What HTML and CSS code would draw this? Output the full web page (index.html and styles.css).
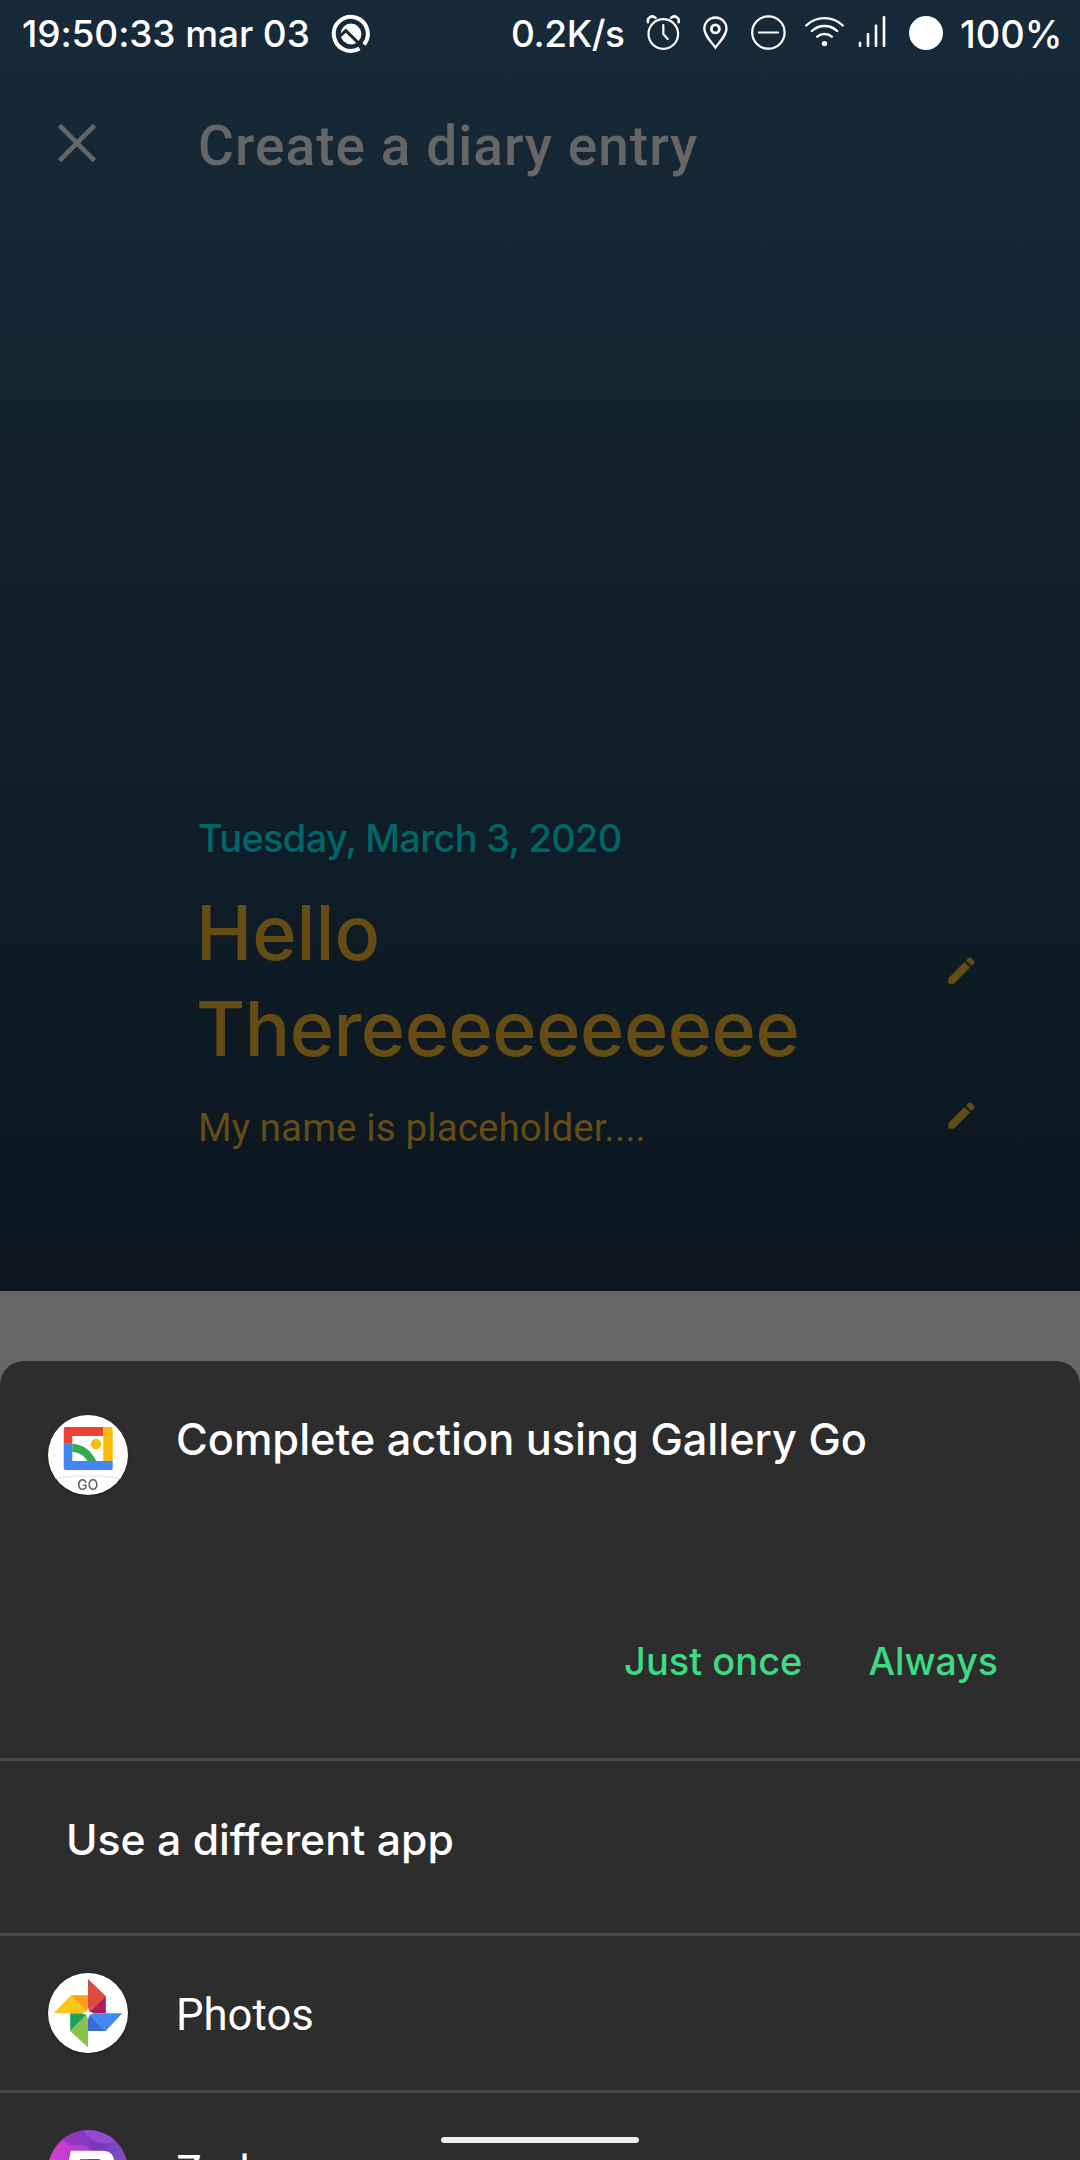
FILE: index.html
```html
<!DOCTYPE html>
<html lang="en">
<head>
<meta charset="utf-8">
<title>Create a diary entry</title>
<link rel="stylesheet" href="styles.css">
</head>
<body>
<header class="hero">
  <div class="status">
    <span class="clock">19:50:33 mar 03</span>
    <svg class="android-q" width="40" height="40" viewBox="0 0 40 40" fill="none">
      <path d="M28.500 34.500A17 17 0 1 1 33 30.600" stroke="#fff" stroke-width="4"/>
      <circle cx="20" cy="20" r="10.400" fill="#fff"/>
      <path d="M7.500 23.500L14.800 16.600L27 28.500" stroke="#162937" stroke-width="3"/>
    </svg>
    <div class="system">
      <span class="speed">0.2K/s</span>
      <svg class="alarm" width="35" height="66" viewBox="0 0 35 66" fill="none" stroke="#fff" stroke-width="2.200" stroke-linecap="round">
        <circle cx="17.300" cy="34" r="14.800"/>
        <path d="M17.300 25v9l4.400 5"/>
        <path d="M2 22.200c-1.300-4.400 4.200-7.600 7.500-4.300M32.600 22.200c1.300-4.400-4.200-7.600-7.500-4.300" stroke-width="2.600"/>
      </svg>
      <svg class="pin" width="29" height="66" viewBox="0 0 29 66" fill="none" stroke="#fff" stroke-width="2.300">
        <path d="M14.400 47.500C9 40.500 3.300 35 3.300 28.600a11.100 11.100 0 0 1 22.200 0C25.500 35 19.800 40.500 14.400 47.500z"/>
        <circle cx="14.400" cy="28.900" r="4" stroke-width="2.800"/>
      </svg>
      <svg class="dnd" width="37" height="66" viewBox="0 0 37 66" fill="none" stroke="#fff" stroke-width="2.200" stroke-linecap="round">
        <circle cx="18.400" cy="32.500" r="16.200"/>
        <path d="M9 32.500h19"/>
      </svg>
      <svg class="wifi" width="43" height="66" viewBox="0 0 43 66" fill="none" stroke="#fff" stroke-width="2.400" stroke-linecap="round">
        <path d="M3.200 25.500a26.500 26.500 0 0 1 36.600 0M8.800 31a18.500 18.500 0 0 1 25.400 0M14.200 36.700a11 11 0 0 1 14.600 0"/>
        <circle cx="21.500" cy="43.600" r="2.700" fill="#fff" stroke="none"/>
      </svg>
      <svg class="signal" width="30" height="66" viewBox="0 0 30 66" fill="#fff">
        <rect x="1.700" y="41.800" width="2.600" height="5.200" rx="1"/>
        <rect x="9.700" y="33" width="2.600" height="14" rx="1"/>
        <rect x="17.700" y="24.500" width="2.600" height="22.500" rx="1"/>
        <rect x="25.700" y="16" width="2.600" height="31" rx="1"/>
      </svg>
      <span class="battery"></span>
      <span class="percent">100%</span>
    </div>
  </div>

  <div class="toolbar">
    <svg class="close" width="40" height="40" viewBox="0 0 40 40" stroke="#666" stroke-width="4.600"><path d="M2.600 2.300L37.400 37.700M37.400 2.300L2.600 37.700"/></svg>
    <h1>Create a diary entry</h1>
  </div>

  <div class="entry">
    <p class="date">Tuesday, March 3, 2020</p>
    <div class="field">
      <h2><span>Hello</span><br><span class="long">Thereeeeeeeeee</span></h2>
      <svg class="pencil" viewBox="0 0 24 24"><path d="M3 17.250V21h3.750L17.810 9.940l-3.750-3.750zM20.710 7.040a1 1 0 0 0 0-1.410l-2.340-2.340a1 1 0 0 0-1.410 0l-1.830 1.830 3.750 3.750z"/></svg>
    </div>
    <div class="field note">
      <p>My name is placeholder....</p>
      <svg class="pencil" viewBox="0 0 24 24"><path d="M3 17.250V21h3.750L17.810 9.940l-3.750-3.750zM20.710 7.040a1 1 0 0 0 0-1.410l-2.340-2.340a1 1 0 0 0-1.410 0l-1.830 1.830 3.750 3.750z"/></svg>
    </div>
  </div>
</header>

<main class="sheet">
  <section class="chosen">
    <div class="chosen-title">
      <svg class="app-icon" viewBox="0 0 80 80">
        <circle cx="40" cy="40" r="40" fill="#fff"/>
        <path d="M15.700 28.700V14a2 2 0 0 1 2-2H55.300v9H24.300v7.700z" fill="#ea4335"/>
        <path d="M55.300 12H62.700a2 2 0 0 1 2 2V46H55.300z" fill="#fbbc04"/>
        <path d="M15.700 28.700h8.600V46H64.700v7a2 2 0 0 1-2 2H17.700a2 2 0 0 1-2-2z" fill="#4285f4"/>
        <path d="M24.300 28.700C35 28.900 44 36 48.200 46H39.200C36 40.500 31 37.400 24.300 37z" fill="#34a853"/>
        <circle cx="48" cy="29" r="5.200" fill="#fbbc04"/>
        <path d="M7.500 63.300Q40 58 72.500 63.300" fill="none" stroke="#e9e9e9" stroke-width="1.400"/>
        <text class="go" x="40" y="74.700" text-anchor="middle">GO</text>
      </svg>
      <h3>Complete action using Gallery Go</h3>
    </div>
    <div class="actions">
      <span>Just once</span>
      <span class="always">Always</span>
    </div>
  </section>

  <section class="other">Use a different app</section>

  <section class="app">
    <svg class="app-icon" viewBox="0 0 80 80">
      <circle cx="40" cy="40" r="40" fill="#fff"/>
      <path d="M40 6L57.800 23L40 40.300z" fill="#db4c3f"/>
      <path d="M57.800 23V40.300H40z" fill="#b01c5a"/>
      <path d="M40 40.300H74.300L57.800 58z" fill="#4486f4"/>
      <path d="M40 40.300V58H57.800z" fill="#3b6bd3"/>
      <path d="M40 40.300V74.500L22.200 58z" fill="#8bc34a"/>
      <path d="M22.200 40.300V58L40 40.300z" fill="#1da261"/>
      <path d="M5.700 40.300L22.800 22.300L40 40.300z" fill="#fec51b"/>
      <path d="M22.800 22.300H40V40.300z" fill="#ff9e16"/>
      <path d="M40 34.300l1.600 4.400 4.400 1.600-4.400 1.600L40 46.300l-1.600-4.400-4.400-1.600 4.400-1.600z" fill="#fff"/>
    </svg>
    <span>Photos</span>
  </section>

  <section class="app">
    <svg class="app-icon" viewBox="0 0 80 80">
      <defs>
        <linearGradient id="violet" x1="0" y1=".4" x2="1" y2=".4">
          <stop offset="0" stop-color="#d13dcb"/><stop offset=".3" stop-color="#a93bc4"/><stop offset=".6" stop-color="#7039be"/><stop offset="1" stop-color="#8350c4"/>
        </linearGradient>
        <clipPath id="disc"><circle cx="40" cy="40" r="40"/></clipPath>
      </defs>
      <g clip-path="url(#disc)">
        <rect width="80" height="80" fill="url(#violet)"/>
        <path d="M14 8C18 18 28 16 37 14.500C42 12 54 22 60 14L50 -2H22z" fill="#8438bd" opacity=".7"/>
        <path d="M36 -1C38 9 50 16 67 12L60 -2z" fill="#924ccf"/>
        <path d="M0 30L15 9C20 18 29 14 36 15.500C42 17 43 21 43 25L20 50H0z" fill="#ca43ce" opacity=".65"/>
      </g>
      <path d="M23 20.700H54C63 20.700 67 26 66 34L58 60H14L18 50H46L52 29H32L30 38H19z" fill="#fff"/>
    </svg>
    <span>Zedge</span>
  </section>
</main>
<div class="home-bar"></div>
</body>
</html>
```
FILE: styles.css
```css
* { box-sizing: border-box; margin: 0; padding: 0; }
body {
  width: 1080px;
  height: 2160px;
  overflow: hidden;
  position: relative;
  display: flex;
  flex-direction: column;
  background: #666;
  color: #fff;
  font-family: Inter, "Noto Sans", sans-serif;
  font-weight: 500;
}
svg { display: block; flex: none; }
h1, h2, h3 { font-weight: 500; }

.hero {
  height: 1291px;
  flex: none;
  background: linear-gradient(#172a39, #10202b 50%, #0b161f);
}
.status {
  height: 66px;
  display: flex;
  align-items: center;
  padding: 1px 17px 0 22px;
  font-size: 37px;
  line-height: 66px;
  white-space: nowrap;
}
.clock { width: 309px; letter-spacing: -.1px; }
.system { margin-left: auto; display: flex; align-items: center; height: 66px; }
.system svg { margin-top: -1px; }
.speed { width: 113px; letter-spacing: -.4px; }
.alarm { margin-left: 22px; }
.pin, .dnd { margin-left: 20px; }
.wifi { margin-left: 16px; }
.signal { margin-left: 11px; }
.battery { width: 34px; height: 34px; border-radius: 50%; background: #fff; margin: -1px 0 0 22px; }
.percent { width: 103px; margin-left: 17px; font-size: 38px; }

.toolbar {
  display: flex;
  align-items: center;
  height: 160px;
  padding: 0 57px;
  gap: 101px;
}
.close { margin-top: -6px; }
.toolbar h1 {
  font: 500 55px Roboto, sans-serif;
  letter-spacing: 1.050px;
  color: #666;
}

.entry { padding: 582px 101px 0 198px; color: #644c14; }
.date {
  font-size: 38px;
  line-height: 60px;
  letter-spacing: -.7px;
  color: #00666a;
}
.field { display: flex; align-items: center; justify-content: space-between; }
h2 {
  font-size: 75.500px;
  line-height: 96px;
  margin: 17px 0 0 -2px;
}
.long { letter-spacing: -.5px; }
.pencil { width: 35px; height: 35px; fill: #644c14; }
.field h2 + .pencil { margin-top: -5px; }
.note { height: 60px; margin-top: 21px; }
.note p { font: 400 38.500px/60px Roboto, sans-serif; letter-spacing: .12px; }
.note .pencil { margin-top: -26px; }

.sheet {
  margin-top: 70px;
  flex: 1;
  min-height: 0;
  overflow: hidden;
  background: #2d2d2d;
  border-radius: 24px 24px 0 0;
}
.sheet section { border-bottom: 3px solid #484848; }
.app-icon { width: 80px; height: 80px; overflow: visible; filter: drop-shadow(0 1px 1px rgba(0, 0, 0, .35)); }
.go { font: 500 13.800px Inter, sans-serif; letter-spacing: .4px; fill: #5f6368; }

.chosen { height: 400px; padding: 54px 82px 0 48px; }
.chosen-title { display: flex; gap: 48px; }
h3 { font-size: 43.300px; line-height: 48px; }
.actions {
  display: flex;
  align-items: baseline;
  justify-content: flex-end;
  gap: 66px;
  margin-top: 136px;
  color: #3ddc84;
  font-size: 38px;
  line-height: 60px;
}
.always { font-size: 37.500px; }
.other {
  height: 175px;
  padding: 49px 0 0 66px;
  font-size: 42.700px;
  line-height: 60px;
}
.app {
  height: 157px;
  display: flex;
  align-items: center;
  gap: 48px;
  padding-left: 48px;
  font: 400 43.700px Roboto, sans-serif;
}
.app span { padding-top: 4px; }

.home-bar {
  position: absolute;
  left: 441px;
  top: 2137px;
  width: 198px;
  height: 6px;
  border-radius: 3px;
  background: #eee;
}
```
